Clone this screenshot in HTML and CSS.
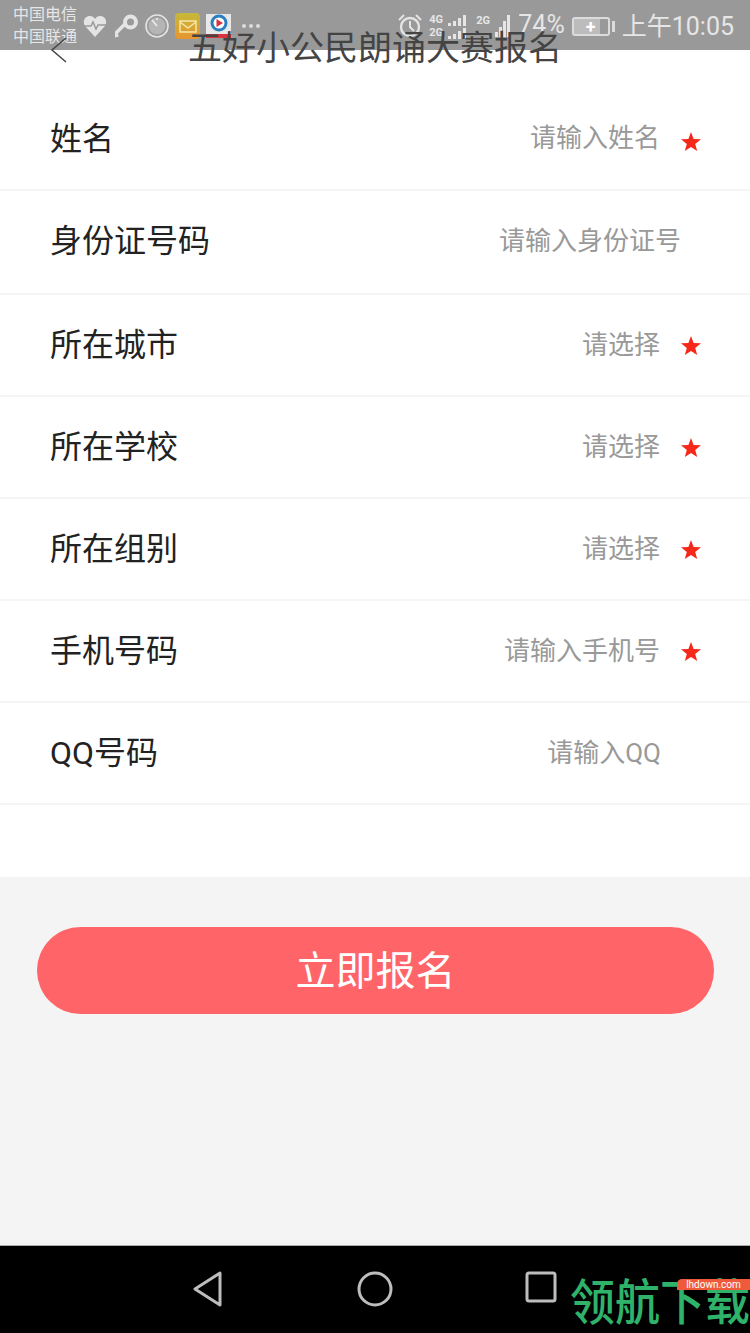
FILE: index.html
```html
<!DOCTYPE html>
<html lang="zh-CN">
<head>
  <meta charset="UTF-8" />
  <meta name="viewport" content="width=device-width, initial-scale=1.0">
  <title>五好小公民朗诵大赛报名</title>
  <link rel="stylesheet" href="styles.css">
</head>
<body>

  <div class="top">
    <div class="status-bar">
      <div class="carrier">
        <span>中国电信</span>
        <span>中国联通</span>
      </div>
      <svg class="st-heart" width="24" height="24" viewBox="0 0 24 24">
        <path d="M12 23 L2 12 C-1 7 2 2 7 2 C9 2 11 3 12 5 C13 3 15 2 17 2 C22 2 25 7 22 12 Z" fill="#e4e4e4"/>
        <path d="M1 12 H8 L10 8 L13 15 L15 11 H23" fill="none" stroke="#999" stroke-width="1.5"/>
      </svg>
      <svg class="st-key" width="24" height="24" viewBox="0 0 24 24">
        <path d="M2 23 L1 19 L11 9" fill="none" stroke="#e4e4e4" stroke-width="3.5"/>
        <circle cx="15.5" cy="8" r="5.5" fill="none" stroke="#e4e4e4" stroke-width="4"/>
      </svg>
      <svg class="st-clock" width="24" height="24" viewBox="0 0 24 24">
        <circle cx="12" cy="12" r="11" fill="none" stroke="#e4e4e4" stroke-width="1.6"/>
        <circle cx="12" cy="12" r="8.5" fill="#b5b5b5"/>
        <path d="M7 6 L12 12 M12 4 V6" stroke="#eee" stroke-width="1.5"/>
      </svg>
      <div class="st-mail">
        <svg width="18" height="13" viewBox="0 0 18 13">
          <rect x="1" y="1" width="16" height="11" fill="none" stroke="#f6e7a8" stroke-width="1.5"/>
          <path d="M1 2 L9 8 L17 2" fill="none" stroke="#f6e7a8" stroke-width="1.5"/>
        </svg>
      </div>
      <div class="st-app">
        <svg width="20" height="20" viewBox="0 0 20 20">
          <circle cx="10" cy="9" r="7" fill="#fff" stroke="#2a7fc0" stroke-width="3"/>
          <path d="M7.5 5 L14 9 L7.5 13 Z" fill="#d8343f"/>
        </svg>
        <i class="st-app-tag"></i>
      </div>
      <div class="st-more">
        <i></i><i></i><i></i>
      </div>
      <div class="status-right">
        <svg class="st-alarm" width="24" height="24" viewBox="0 0 24 24">
          <circle cx="12" cy="13" r="9" fill="none" stroke="#e4e4e4" stroke-width="2.4"/>
          <path d="M12 7 V13 L16 17 M1 6 L6 1 M18 1 L23 6" fill="none" stroke="#e4e4e4" stroke-width="2"/>
        </svg>
        <div class="signal-pair">
          <div class="signal-row"><b>4G</b><i class="b1"></i><i class="b2"></i><i class="b3"></i><i class="b4"></i></div>
          <div class="signal-row"><b>2G</b><i class="b1"></i><i class="b2"></i><i class="b3"></i><i class="b4"></i></div>
        </div>
        <div class="signal-single">
          <b>2G</b>
          <i class="s1"></i><i class="s2"></i><i class="s3"></i><i class="s4"></i>
        </div>
        <span class="percent">74%</span>
        <div class="battery">
          <div class="battery-body">
            <span>+</span>
          </div>
          <i class="battery-tip"></i>
        </div>
        <span class="time">上午10:05</span>
      </div>
    </div>
    <svg class="back" width="18" height="26" viewBox="0 0 18 26">
      <path d="M16 1 L2 13 L16 25" fill="none" stroke="#444" stroke-width="1.5"/>
    </svg>
    <h1 class="title">五好小公民朗诵大赛报名</h1>
  </div>

  <div class="form">
    <div class="row row-first">
      <span class="label">姓名</span>
      <span class="hint">请输入姓名</span>
      <svg class="star" viewBox="0 0 20 20"><polygon points="10,0 12.6,7 20,7.3 14.2,11.9 16.2,19 10,15 3.8,19 5.8,11.9 0,7.3 7.4,7"/></svg>
    </div>
    <div class="row row-id">
      <span class="label">身份证号码</span>
      <span class="hint">请输入身份证号</span>
    </div>
    <div class="row">
      <span class="label">所在城市</span>
      <span class="hint">请选择</span>
      <svg class="star" viewBox="0 0 20 20"><polygon points="10,0 12.6,7 20,7.3 14.2,11.9 16.2,19 10,15 3.8,19 5.8,11.9 0,7.3 7.4,7"/></svg>
    </div>
    <div class="row">
      <span class="label">所在学校</span>
      <span class="hint">请选择</span>
      <svg class="star" viewBox="0 0 20 20"><polygon points="10,0 12.6,7 20,7.3 14.2,11.9 16.2,19 10,15 3.8,19 5.8,11.9 0,7.3 7.4,7"/></svg>
    </div>
    <div class="row">
      <span class="label">所在组别</span>
      <span class="hint">请选择</span>
      <svg class="star" viewBox="0 0 20 20"><polygon points="10,0 12.6,7 20,7.3 14.2,11.9 16.2,19 10,15 3.8,19 5.8,11.9 0,7.3 7.4,7"/></svg>
    </div>
    <div class="row">
      <span class="label">手机号码</span>
      <span class="hint">请输入手机号</span>
      <svg class="star" viewBox="0 0 20 20"><polygon points="10,0 12.6,7 20,7.3 14.2,11.9 16.2,19 10,15 3.8,19 5.8,11.9 0,7.3 7.4,7"/></svg>
    </div>
    <div class="row row-qq">
      <span class="label">QQ号码</span>
      <span class="hint">请输入QQ</span>
    </div>
  </div>

  <div class="apply">
    <button class="apply-btn"><span>立即报名</span></button>
  </div>

  <div class="nav-bar">
    <svg class="nav-back" width="32" height="36" viewBox="0 0 32 36">
      <path d="M28 2 L3 18 L28 34 Z" fill="none" stroke="#bdbdbd" stroke-width="3" stroke-linejoin="round"/>
    </svg>
    <svg class="nav-home" width="36" height="36" viewBox="0 0 36 36">
      <circle cx="18" cy="18" r="16" fill="none" stroke="#bdbdbd" stroke-width="3"/>
    </svg>
    <svg class="nav-recent" width="32" height="32" viewBox="0 0 32 32">
      <rect x="2" y="2" width="28" height="28" rx="2" fill="none" stroke="#bdbdbd" stroke-width="3"/>
    </svg>
    <div class="watermark">
      <span class="watermark-site">lhdown.com</span>
      <span class="watermark-name">领航下载</span>
    </div>
  </div>

</body>
</html>
```

FILE: styles.css
```css
* {
  box-sizing: border-box;
}

body {
  margin: 0;
  padding: 0;
  font-family: Roboto, "Noto Sans CJK SC", sans-serif;
  background-color: #fff;
  display: flex;
  flex-direction: column;
  height: 1333px;
  overflow: hidden;
}

.top {
  position: relative;
  height: 88px;
  flex-shrink: 0;
}

.status-bar {
  height: 50px;
  background-color: #999;
  display: flex;
  align-items: center;
  padding: 2px 16px 0 13px;
  color: #e6e6e6;
}

.carrier {
  display: flex;
  flex-direction: column;
  font-size: 16px;
  line-height: 22px;
  width: 70px;
  flex-shrink: 0;
}

.st-heart,
.st-key,
.st-clock {
  flex-shrink: 0;
}

.st-key {
  margin-left: 8px;
}

.st-clock {
  margin-left: 6px;
}

.st-mail {
  width: 25px;
  height: 26px;
  margin-left: 6px;
  border-radius: 4px;
  background: linear-gradient(#c5b93a, #e8952f);
  display: flex;
  align-items: center;
  justify-content: center;
}

.st-app {
  position: relative;
  width: 25px;
  height: 24px;
  margin-left: 6px;
  background-color: #e8e8e8;
  display: flex;
  justify-content: center;
}

.st-app-tag {
  position: absolute;
  left: 0;
  bottom: 0;
  width: 25px;
  height: 4px;
  background-color: #d8343f;
}

.st-more {
  display: flex;
  gap: 3px;
  margin-left: 11px;
}

.st-more i {
  width: 4px;
  height: 4px;
  border-radius: 50%;
  background-color: #dcdcdc;
}

.status-right {
  display: flex;
  align-items: center;
  margin-left: auto;
}

.signal-pair {
  margin-left: 7px;
  width: 40px;
  display: flex;
  flex-direction: column;
}

.signal-row {
  display: flex;
  align-items: flex-end;
  gap: 2px;
  height: 13px;
}

.signal-row b,
.signal-single b {
  font-size: 11px;
  line-height: 12px;
  font-weight: bold;
  margin-right: 3px;
}

.signal-row i {
  width: 3px;
  background-color: #e6e6e6;
}

.signal-row .b1 { height: 3px; }
.signal-row .b2 { height: 5px; }
.signal-row .b3 { height: 8px; }
.signal-row .b4 { height: 11px; }

.signal-single {
  position: relative;
  display: flex;
  align-items: flex-end;
  gap: 1px;
  width: 34px;
  height: 22px;
  margin-left: 7px;
  justify-content: flex-end;
}

.signal-single b {
  position: absolute;
  left: 0;
  top: 0;
}

.signal-single i {
  width: 3px;
  background-color: #e6e6e6;
}

.signal-single .s1 { height: 5px; }
.signal-single .s2 { height: 10px; }
.signal-single .s3 { height: 16px; }
.signal-single .s4 { height: 22px; }

.percent {
  font-size: 25px;
  margin: 0 0 4px 8px;
}

.battery {
  display: flex;
  align-items: center;
  margin-left: 7px;
}

.battery-body {
  width: 38px;
  height: 19px;
  border: 2px solid #dcdcdc;
  border-radius: 3px;
  background: linear-gradient(to right, #bcbcbc 76%, transparent 76%);
  display: flex;
  align-items: center;
  justify-content: center;
  font-size: 18px;
  font-weight: bold;
  line-height: 15px;
  color: #fff;
}

.battery-tip {
  width: 3px;
  height: 11px;
  margin-left: 2px;
  background-color: #dcdcdc;
}

.time {
  font-size: 25px;
  margin: 0 0 4px 7px;
}

.back {
  position: absolute;
  left: 50px;
  top: 37px;
}

.title {
  position: absolute;
  left: 0;
  right: 0;
  top: 27px;
  margin: 0;
  text-align: center;
  font-size: 34px;
  line-height: 42px;
  font-weight: normal;
  color: #444;
}

.form {
  flex-shrink: 0;
  height: 789px;
}

.row {
  height: 102px;
  padding: 0 49px 6px 50px;
  display: flex;
  align-items: center;
  border-bottom: 2px solid #f5f5f5;
}

.row-first {
  height: 103px;
}

.row-id {
  height: 104px;
  padding-right: 69px;
  padding-bottom: 8px;
}

.row-qq {
  padding-right: 89px;
}

.label {
  font-size: 32px;
  color: #222;
}

.hint {
  margin-left: auto;
  font-size: 26px;
  color: #999;
}

.star {
  width: 20px;
  height: 20px;
  margin-left: 21px;
  margin-top: 8px;
  fill: #f5281a;
}

.row-first .star {
  margin-top: 12px;
}

.apply {
  flex: 1;
  background-color: #f4f4f4;
  padding: 50px 36px 0 37px;
}

.apply-btn {
  display: block;
  width: 100%;
  height: 87px;
  padding: 0 0 6px;
  border: none;
  border-radius: 44px;
  background-color: #ff6568;
  color: #fff;
  font-family: inherit;
  font-size: 40px;
}

.nav-bar {
  position: relative;
  height: 88px;
  flex-shrink: 0;
  background-color: #000;
  border-top: 1px solid #aaa;
}

.nav-bar svg {
  position: absolute;
  top: 25px;
}

.nav-back {
  left: 192px;
}

.nav-home {
  left: 357px;
}

.nav-recent {
  left: 525px;
}

.watermark {
  position: absolute;
  left: 570px;
  right: 0;
  bottom: 0;
  height: 54px;
}

.watermark-name {
  position: absolute;
  left: 0;
  bottom: 3px;
  font-size: 45px;
  line-height: 52px;
  font-weight: 500;
  color: #2fb36a;
  white-space: nowrap;
  transform: scaleY(1.08);
}

.watermark-site {
  position: absolute;
  right: 0;
  top: 0;
  width: 73px;
  height: 11px;
  border-radius: 5px 0 0 0;
  background-color: #ee5a3a;
  color: #fff;
  font-size: 10px;
  line-height: 11px;
  text-align: center;
  z-index: 1;
}
```
